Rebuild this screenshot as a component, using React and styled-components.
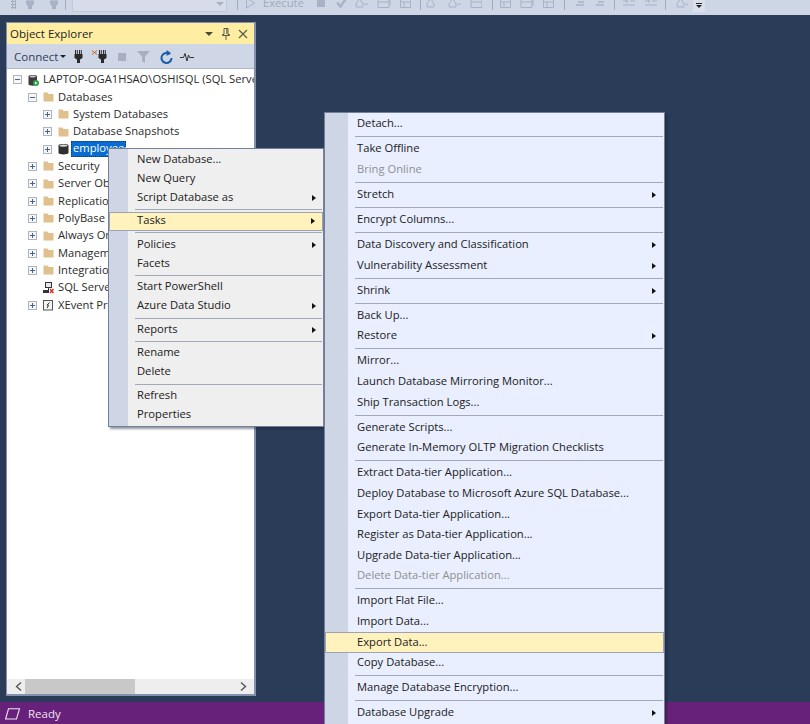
import React from "react";
import styled, { createGlobalStyle } from "styled-components";

const Global = createGlobalStyle`
  html, body { margin: 0; padding: 0; height: 100%; overflow: hidden; background: #2b3c59; }
  #root { height: 100%; }
  * { box-sizing: border-box; }
`;

const FONT = `"Open Sans", "Noto Sans", "Liberation Sans", sans-serif`;

const Page = styled.div`
  position: relative;
  width: 810px;
  height: 724px;
  overflow: hidden;
  display: flex;
  flex-direction: column;
  font-family: ${FONT};
  font-size: 11.2px;
  color: #1e1e1e;
`;

/* ---- top toolbar ---- */
const TopBar = styled.div`
  height: 15px;
  flex: none;
  background: #ced5e5;
  display: flex;
  align-items: flex-start;
  overflow: hidden;
  padding-left: 10px;
`;
const Grip = styled.span`
  flex: none;
  width: 5px;
  height: 9px;
  margin-left: 1px;
  background: radial-gradient(circle, #a4acbf 1px, transparent 1.2px) 0 0 / 3px 3px;
`;
const Tool = styled.span`
  flex: none;
  display: inline-flex;
  margin-top: -3px;
  margin-left: ${(p) => p.$gap || 0}px;
  color: #a9b1c4;
`;
const TopSep = styled.span`
  flex: none;
  width: 1px;
  height: 10px;
  background: #a2aabd;
  margin-left: ${(p) => p.$gap || 0}px;
`;
const Combo = styled.span`
  flex: none;
  width: 155px;
  height: 12px;
  margin-left: 6px;
  border: 1px solid #c2c9da;
  border-top: 0;
  background: #d6dcea;
  display: flex;
  justify-content: flex-end;
  padding: 2px 2px 0 0;
`;
const ComboArrow = styled.span`
  width: 0;
  height: 0;
  border-left: 4px solid transparent;
  border-right: 4px solid transparent;
  border-top: 4px solid #a9b1c4;
`;
const ExecuteLabel = styled.span`
  flex: none;
  margin-left: 7px;
  margin-top: -3px;
  color: #a0a8bb;
  line-height: 12px;
`;
const Overflow = styled.span`
  flex: none;
  margin-left: 5px;
  width: 12px;
  height: 12px;
  background: #d9dfec;
  display: flex;
  flex-direction: column;
  align-items: center;
  padding-top: 3px;
  gap: 1px;
  &::before {
    content: "";
    width: 6px;
    height: 1px;
    background: #222;
  }
  &::after {
    content: "";
    border-left: 3px solid transparent;
    border-right: 3px solid transparent;
    border-top: 3px solid #222;
  }
`;

/* ---- work area ---- */
const Workspace = styled.main`
  flex: 1;
  min-height: 0;
  background: #2b3c59;
  padding: 7px 0 6px 6px;
  display: flex;
`;
const Panel = styled.section`
  width: 250px;
  height: 100%;
  display: flex;
  flex-direction: column;
  border: 1px solid #8391ad;
  border-width: 1px 2px 2px 1px;
  background: #fff;
`;
const TitleBar = styled.header`
  height: 21px;
  flex: none;
  background: #ffeea2;
  display: flex;
  align-items: center;
  padding: 0 6px 0 3px;
  font-size: 11.5px;
  color: #222;
`;
const TitleText = styled.span`
  flex: 1;
`;
const TitleButtons = styled.span`
  display: flex;
  align-items: center;
  gap: 7px;
`;
const PanelTools = styled.div`
  height: 24px;
  flex: none;
  background: #cfd6e6;
  display: flex;
  align-items: center;
  padding: 1px 0 0 7px;
`;
const ConnectLabel = styled.span`
  color: #2d3f5e;
  font-size: 11.5px;
`;
const Caret = styled.span`
  width: 0;
  height: 0;
  margin: 0 0 0 2px;
  border-left: 3px solid transparent;
  border-right: 3px solid transparent;
  border-top: 3px solid #222;
`;
const PanelTool = styled.span`
  display: inline-flex;
  margin-left: ${(p) => p.$gap}px;
`;

const Tree = styled.div`
  flex: 1;
  min-height: 0;
  padding-top: 2px;
  overflow: hidden;
  border-top: 1px solid #aeb7cb;
`;
const Row = styled.div`
  height: 17.35px;
  display: flex;
  align-items: center;
  white-space: nowrap;
  padding-left: ${(p) => 6 + p.$level * 15}px;
  color: #2a2a2a;
`;
const Expander = styled.span`
  flex: none;
  width: 9px;
  height: 9px;
  margin-right: 6px;
  border: 1px solid #b0b4bc;
  background: #f6f6f6;
  position: relative;
  visibility: ${(p) => (p.$kind ? "visible" : "hidden")};
  &::before {
    content: "";
    position: absolute;
    left: 1px;
    right: 1px;
    top: 3px;
    height: 1px;
    background: #47638f;
  }
  &::after {
    content: "";
    display: ${(p) => (p.$kind === "plus" ? "block" : "none")};
    position: absolute;
    top: 1px;
    bottom: 1px;
    left: 3px;
    width: 1px;
    background: #47638f;
  }
`;
const RowIcon = styled.span`
  flex: none;
  width: 11px;
  height: 12px;
  display: inline-flex;
  margin-right: 3px;
`;
const RowLabel = styled.span`
  padding: 0 1px;
  margin-bottom: 2px;
  ${(p) =>
    p.$selected &&
    `
    background: #0a6cd0;
    color: #fff;
    margin: 0 0 0 -1px;
    padding: 0 2px;
    outline: 1px dotted #0b3a78;
    outline-offset: -1px;
    width: 55px;
    height: 16px;
    line-height: 14px;
  `}
`;
const HScroll = styled.div`
  height: 15px;
  flex: none;
  background: #eeeeee;
  display: flex;
  align-items: center;
  padding: 0 7px 0 8px;
`;
const Thumb = styled.div`
  width: 110px;
  height: 100%;
  margin-left: 3px;
  background: #c8c8c8;
`;
const ScrollGap = styled.div`
  flex: 1;
`;

/* ---- status bar ---- */
const StatusBar = styled.footer`
  height: 22px;
  flex: none;
  background: #68217a;
  color: #ece4ef;
  display: flex;
  align-items: center;
  padding: 1px 0 0 5px;
  gap: 8px;
  font-size: 11.5px;
`;

/* ---- context menus ---- */
const Menu = styled.nav`
  position: absolute;
  left: ${(p) => p.$left}px;
  top: ${(p) => p.$top}px;
  width: ${(p) => p.$width}px;
  padding: 1px 1px 1px;
  border: 1px solid #72809c;
  box-shadow: 2px 2px 2px rgba(20, 28, 45, 0.45);
  background: linear-gradient(
    to right,
    #ced5e5 ${(p) => p.$gutter}px,
    ${(p) => p.$bg} ${(p) => p.$gutter}px
  );
`;
const Item = styled.div`
  height: ${(p) => p.$h}px;
  display: flex;
  align-items: center;
  justify-content: space-between;
  white-space: nowrap;
  margin: 0 -1px 0 ${(p) => (p.$active ? -1 : 0)}px;
  padding-left: ${(p) => p.$indent}px;
  padding-right: ${(p) => p.$right}px;
  color: ${(p) => (p.$off ? "#8f8f8f" : "#202020")};
  ${(p) =>
    p.$active &&
    `
    background: #fff2bd;
    border: 1px solid #9aa3b8;
  `}
`;
const ItemLabel = styled.span`
  margin-bottom: 3px;
`;
const Arrow = styled.span`
  width: 0;
  height: 0;
  border-top: 3.5px solid transparent;
  border-bottom: 3.5px solid transparent;
  border-left: 4px solid #111;
`;
const Sep = styled.div`
  height: ${(p) => p.$h}px;
  display: flex;
  align-items: center;
  padding-left: ${(p) => p.$indent}px;
  &::after {
    content: "";
    flex: 1;
    height: 1px;
    background: #a1a8b8;
  }
`;

/* ---- drawings ---- */
const Svg = ({ w = 12, h = 12, vb, children, ...rest }) => (
  <svg width={w} height={h} viewBox={vb || `0 0 ${w} ${h}`} fill="none" {...rest}>
    {children}
  </svg>
);
const Folder = () => (
  <Svg w={11} h={12}>
    <path d="M0.5 3V1.5h4l1 1.5h5v7.5h-10z" fill="#e0c08c" />
  </Svg>
);
const Cylinder = () => (
  <Svg w={11} h={12}>
    <path d="M0.5 2.5C0.5 .6 10.5 .6 10.5 2.5V10C10.5 11.9 0.5 11.9 0.5 10z" fill="#2f2f2f" />
    <ellipse cx="5.5" cy="2.6" rx="4" ry="1.2" fill="#d8d8d8" />
  </Svg>
);
const ServerIcon = () => (
  <Svg w={11} h={12}>
    <path d="M0.5 2.5C0.5 .6 9 .6 9 2.5V10.5C9 12 0.5 12 0.5 10.5z" fill="#3c3c3c" />
    <ellipse cx="4.7" cy="2.6" rx="3.2" ry="1" fill="#c8c8c8" />
    <circle cx="8" cy="9" r="3" fill="#2f9e44" />
    <path d="M7 7.5v3l2.4-1.5z" fill="#fff" />
  </Svg>
);
const AgentIcon = () => (
  <Svg w={11} h={12}>
    <rect x="2.5" y=".5" width="6" height="5" fill="#e8e8e8" stroke="#333" />
    <path d="M5.5 5.5v3M0 8.5h6" stroke="#333" />
    <rect x="0" y="8" width="6" height="3" fill="#333" />
    <path d="M7 7l3.5 4M10.5 7L7 11" stroke="#d03020" strokeWidth="1.4" />
  </Svg>
);
const XEventIcon = () => (
  <Svg w={11} h={12}>
    <rect x=".5" y="1.5" width="9" height="9.5" fill="#f4f4f4" stroke="#555" />
    <path d="M6.5 3.5L4 6.2h1.6L4.2 9" stroke="#333" />
  </Svg>
);
const Plug = ({ color = "#2b2b2b" }) => (
  <Svg w={9} h={13}>
    <path d="M1.5 0v4M3.3 0v4M5.5 0v4M7.3 0v4" stroke={color} />
    <path d="M.5 4h8v4l-2.5 1.5v3.5h-3V9.5L.5 8z" fill={color} />
  </Svg>
);
const DisconnectPlug = () => (
  <Svg w={15} h={13}>
    <path d="M0 .5l5 4M5 .5l-5 4" stroke="#c8641e" />
    <g transform="translate(6 0)">
      <path d="M1.5 0v4M3.3 0v4M5.5 0v4M7.3 0v4" stroke="#2b2b2b" />
      <path d="M.5 4h8v4l-2.5 1.5v3.5h-3V9.5L.5 8z" fill="#2b2b2b" />
    </g>
  </Svg>
);
const Stop = () => (
  <Svg w={8} h={8}>
    <rect width="8" height="8" fill="#a8afc0" />
  </Svg>
);
const Funnel = () => (
  <Svg w={13} h={12}>
    <path d="M0 0h13L8 5.5V12L5 10V5.5z" fill="#a8afc0" />
  </Svg>
);
const Refresh = () => (
  <Svg w={13} h={14}>
    <path d="M9.8 4.2A5 5 0 1 0 11.5 8" stroke="#1a5ea8" strokeWidth="2" />
    <path d="M6.5 0v6l4.5-3z" fill="#1a5ea8" />
  </Svg>
);
const Pulse = () => (
  <Svg w={14} h={10}>
    <path d="M0 5.5h3.5L5 1.5 7 9l1.5-6 1 2.5H14" stroke="#333" />
  </Svg>
);
const PinIcon = () => (
  <Svg w={10} h={12}>
    <path d="M3 .5h4v6h1.5v1h-7v-1H3zM5 8v4M5.8 1v5" stroke="#5a5a4a" />
  </Svg>
);
const CloseIcon = () => (
  <Svg w={10} h={10}>
    <path d="M1 1l8 8M9 1l-8 8" stroke="#5a5a4a" strokeWidth="1.2" />
  </Svg>
);
const PanelCaret = styled.span`
  border-left: 4px solid transparent;
  border-right: 4px solid transparent;
  border-top: 4px solid #4a4a3a;
  margin-right: 1px;
`;
const Chevron = ({ left }) => (
  <Svg w={7} h={9}>
    <path d={left ? "M6 .5L1.5 4.5 6 8.5" : "M1 .5l4.5 4-4.5 4"} stroke="#555" strokeWidth="1.4" />
  </Svg>
);
const StatusIcon = () => (
  <Svg w={15} h={12}>
    <path d="M3.5 .8h11L11.5 11H.6z" stroke="#ece4ef" strokeWidth="1.1" />
  </Svg>
);

/* faint glyphs on the disabled main toolbar */
const glyphs = {
  plug: <path d="M3 0v4M7 0v4M1.5 4h7v3l-2 2v3h-3V9l-2-2z" fill="currentColor" stroke="currentColor" />,
  play: <path d="M1.5 1l8 5-8 5z" stroke="currentColor" />,
  stop: <rect x="1" y="2" width="8" height="8" fill="currentColor" />,
  check: <path d="M1 5.5l3.5 4L10 1.5" stroke="currentColor" strokeWidth="2.4" />,
  flask: <path d="M3 1h3v3l2 3v3H1V7l2-3z M9 6l2 2 2-2" stroke="currentColor" />,
  grid: <path d="M1 1.5h11v9H1zM3 1.5V0h10v8h-1M1 5h11" stroke="currentColor" />,
  doc: <path d="M1.5 1.5h10v9h-10zM1.5 5h10M5 5v5.5" stroke="currentColor" />,
  lines: <path d="M3 2h8M5 5h6M3 8h8" stroke="currentColor" strokeWidth="1.3" />,
  swap: <path d="M1 4h5M8 4h5M1 8h12M5 2v4" stroke="currentColor" />,
};
const Glyph = ({ k, w = 12, gap }) => (
  <Tool $gap={gap}>
    <Svg w={w} h={12}>
      {glyphs[k]}
    </Svg>
  </Tool>
);

/* ---- data ---- */
const treeRows = [
  { level: 0, exp: "minus", icon: <ServerIcon />, label: "LAPTOP-OGA1HSAO\\OSHISQL (SQL Server 15.0.2000 - LAPTOP)" },
  { level: 1, exp: "minus", icon: <Folder />, label: "Databases" },
  { level: 2, exp: "plus", icon: <Folder />, label: "System Databases" },
  { level: 2, exp: "plus", icon: <Folder />, label: "Database Snapshots" },
  { level: 2, exp: "plus", icon: <Cylinder />, label: "employees", selected: true },
  { level: 1, exp: "plus", icon: <Folder />, label: "Security" },
  { level: 1, exp: "plus", icon: <Folder />, label: "Server Objects" },
  { level: 1, exp: "plus", icon: <Folder />, label: "Replication" },
  { level: 1, exp: "plus", icon: <Folder />, label: "PolyBase" },
  { level: 1, exp: "plus", icon: <Folder />, label: "Always On High Availability" },
  { level: 1, exp: "plus", icon: <Folder />, label: "Management" },
  { level: 1, exp: "plus", icon: <Folder />, label: "Integration Services Catalogs" },
  { level: 1, exp: null, icon: <AgentIcon />, label: "SQL Server Agent" },
  { level: 1, exp: "plus", icon: <XEventIcon />, label: "XEvent Profiler" },
];

const S = "-";
const contextItems = [
  "New Database...", "New Query", ">Script Database as", S,
  "*>Tasks", S,
  ">Policies", "Facets", S,
  "Start PowerShell", ">Azure Data Studio", S,
  ">Reports", S,
  "Rename", "Delete", S,
  "Refresh", "Properties",
];
const taskItems = [
  "Detach...", S,
  "Take Offline", "~Bring Online", S,
  ">Stretch", S,
  "Encrypt Columns...", S,
  ">Data Discovery and Classification", ">Vulnerability Assessment", S,
  ">Shrink", S,
  "Back Up...", ">Restore", S,
  "Mirror...", "Launch Database Mirroring Monitor...", "Ship Transaction Logs...", S,
  "Generate Scripts...", "Generate In-Memory OLTP Migration Checklists", S,
  "Extract Data-tier Application...", "Deploy Database to Microsoft Azure SQL Database...",
  "Export Data-tier Application...", "Register as Data-tier Application...",
  "Upgrade Data-tier Application...", "~Delete Data-tier Application...", S,
  "Import Flat File...", "Import Data...", "*Export Data...", "Copy Database...", S,
  "Manage Database Encryption...", S,
  ">Database Upgrade",
];

const MenuList = ({ items, left, top, width, gutter, bg, rowH, sepH, indent, sepIndent, right }) => (
  <Menu $left={left} $top={top} $width={width} $gutter={gutter} $bg={bg}>
    {items.map((raw, i) => {
      if (raw === S) return <Sep key={i} $h={sepH} $indent={sepIndent} />;
      const active = raw.includes("*");
      const off = raw.startsWith("~");
      const sub = raw.includes(">");
      const label = raw.replace(/^[*~]?>?/, "");
      return (
        <Item key={i} $h={rowH} $indent={indent} $right={right} $active={active} $off={off}>
          <ItemLabel>{label}</ItemLabel>
          {sub && <Arrow />}
        </Item>
      );
    })}
  </Menu>
);

export default function App() {
  return (
    <Page>
      <Global />
      <TopBar>
        <Grip />
        <Glyph k="plug" w={10} gap={9} />
        <Glyph k="plug" w={10} gap={14} />
        <TopSep $gap={6} />
        <Combo>
          <ComboArrow />
        </Combo>
        <TopSep $gap={10} />
        <Glyph k="play" w={11} gap={7} />
        <ExecuteLabel>Execute</ExecuteLabel>
        <Glyph k="stop" w={10} gap={12} />
        <Glyph k="check" w={11} gap={10} />
        <Glyph k="flask" w={14} gap={8} />
        <Glyph k="grid" w={14} gap={8} />
        <Glyph k="doc" w={13} gap={8} />
        <TopSep $gap={8} />
        <Glyph k="flask" w={9} gap={5} />
        <Glyph k="flask" w={14} gap={13} />
        <Glyph k="grid" w={12} gap={8} />
        <TopSep $gap={10} />
        <Glyph k="doc" w={13} gap={6} />
        <Glyph k="grid" w={14} gap={8} />
        <Glyph k="doc" w={14} gap={8} />
        <TopSep $gap={8} />
        <Glyph k="lines" w={12} gap={8} />
        <Glyph k="lines" w={12} gap={8} />
        <TopSep $gap={9} />
        <Glyph k="swap" w={14} gap={7} />
        <Glyph k="swap" w={14} gap={8} />
        <TopSep $gap={7} />
        <Glyph k="flask" w={12} gap={10} />
        <Overflow />
      </TopBar>

      <Workspace>
        <Panel>
          <TitleBar>
            <TitleText>Object Explorer</TitleText>
            <TitleButtons>
              <PanelCaret />
              <PinIcon />
              <CloseIcon />
            </TitleButtons>
          </TitleBar>
          <PanelTools>
            <ConnectLabel>Connect</ConnectLabel>
            <Caret />
            <PanelTool $gap={8}><Plug /></PanelTool>
            <PanelTool $gap={9}><DisconnectPlug /></PanelTool>
            <PanelTool $gap={11}><Stop /></PanelTool>
            <PanelTool $gap={11}><Funnel /></PanelTool>
            <PanelTool $gap={10}><Refresh /></PanelTool>
            <PanelTool $gap={7}><Pulse /></PanelTool>
          </PanelTools>
          <Tree>
            {treeRows.map((r) => (
              <Row key={r.label} $level={r.level}>
                <Expander $kind={r.exp} />
                <RowIcon>{r.icon}</RowIcon>
                <RowLabel $selected={r.selected}>{r.label}</RowLabel>
              </Row>
            ))}
          </Tree>
          <HScroll>
            <Chevron left />
            <Thumb />
            <ScrollGap />
            <Chevron />
          </HScroll>
        </Panel>
      </Workspace>

      <StatusBar>
        <StatusIcon />
        <span>Ready</span>
      </StatusBar>

      <MenuList
        items={contextItems}
        left={108}
        top={148}
        width={216}
        gutter={19}
        bg="#efefef"
        rowH={19.05}
        sepH={4.5}
        indent={27}
        sepIndent={25}
        right={7}
      />
      <MenuList
        items={taskItems}
        left={324}
        top={112}
        width={341}
        gutter={23}
        bg="#e9efff"
        rowH={20.62}
        sepH={4.45}
        indent={31}
        sepIndent={29}
        right={8}
      />
    </Page>
  );
}
